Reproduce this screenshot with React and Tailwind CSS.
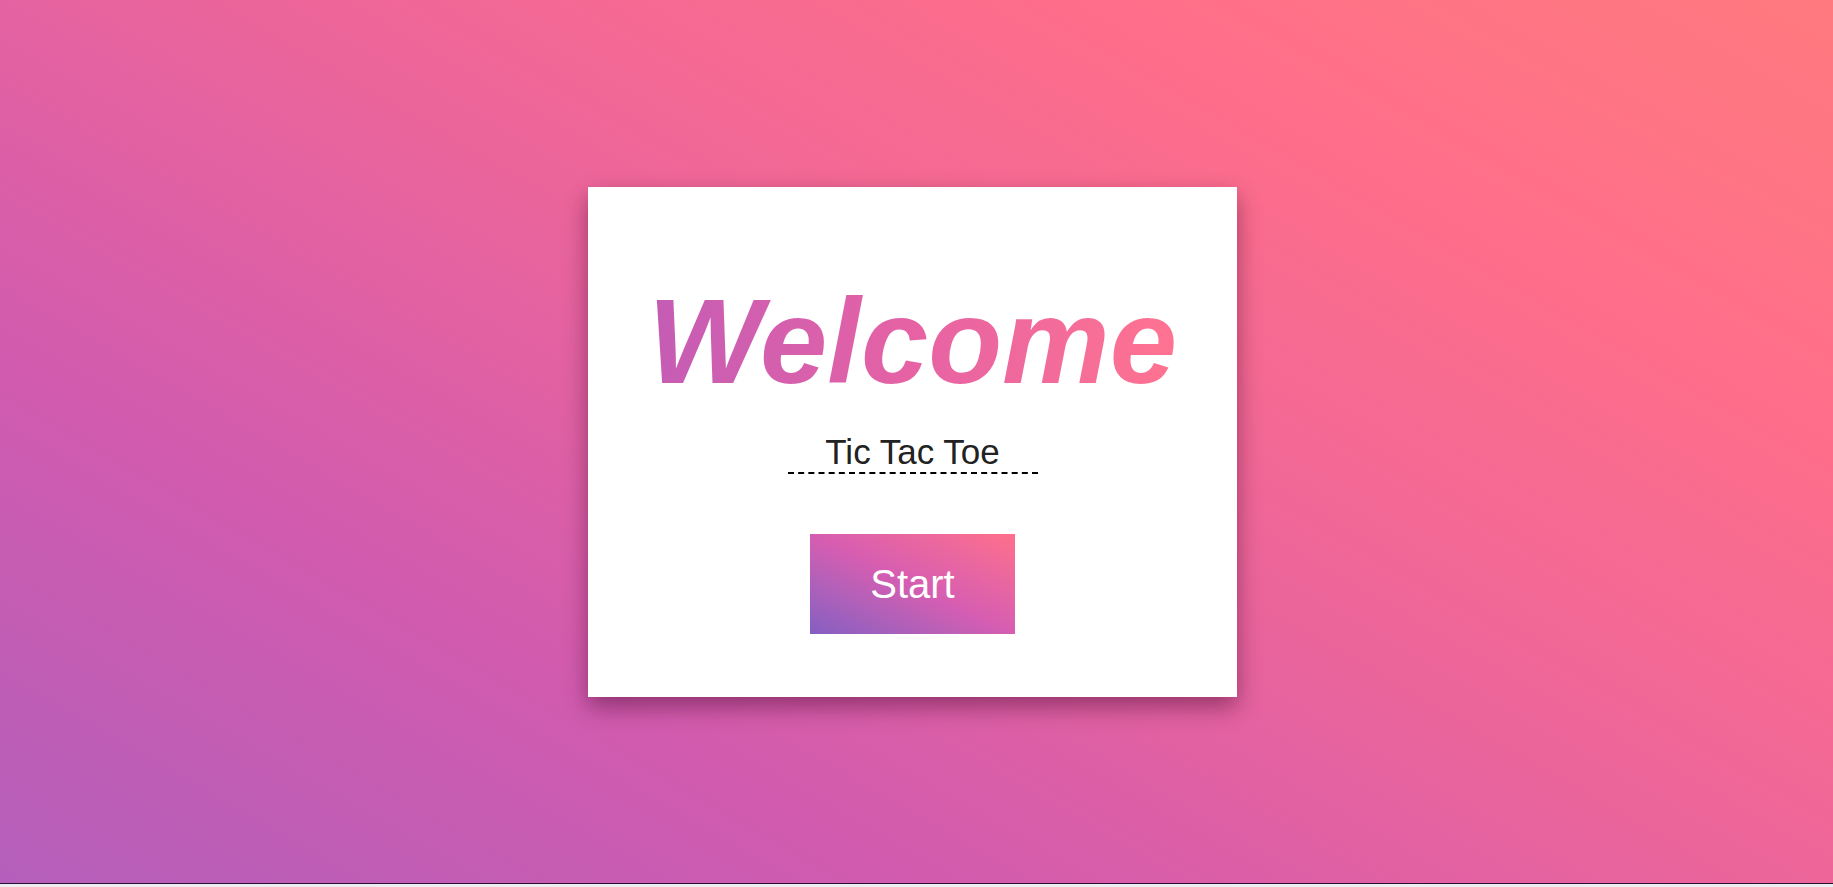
export default function App() {
  return (
    <div className="w-full h-[887px] bg-[#eceef2] overflow-hidden" style={{ fontFamily: '"Liberation Sans", Arial, sans-serif' }}>
      <div className="h-[884px] w-full border-b border-[#2b0c33] bg-[linear-gradient(30deg,#b45fbb_0%,#d25bae_28%,#ee6699_55%,#ff6e8a_78%,#ff7a7f_100%)] flex items-center justify-center pr-2">
        <div className="w-[649px] h-[510px] bg-white shadow-[0_10px_22px_rgba(60,0,40,0.45)] flex flex-col items-center pt-[84px]">
          <h1 className="text-[121px] leading-[140px] font-bold italic bg-linear-to-r from-[#c45cb5] via-[#e662a4] to-[#ff7390] bg-clip-text text-transparent">
            Welcome
          </h1>
          <input
            type="text"
            defaultValue="Tic Tac Toe"
            className="mt-[21px] w-[250px] h-[42px] text-[35px] leading-[40px] text-center text-[#222] bg-transparent border-b-2 border-dashed border-black outline-none"
          />
          <button className="mt-[60px] w-[205px] h-[100px] text-[40px] text-white bg-linear-to-tr from-[#845ec2] via-[#d65db1] to-[#ff6f8a]">
            Start
          </button>
        </div>
      </div>
    </div>
  )
}
